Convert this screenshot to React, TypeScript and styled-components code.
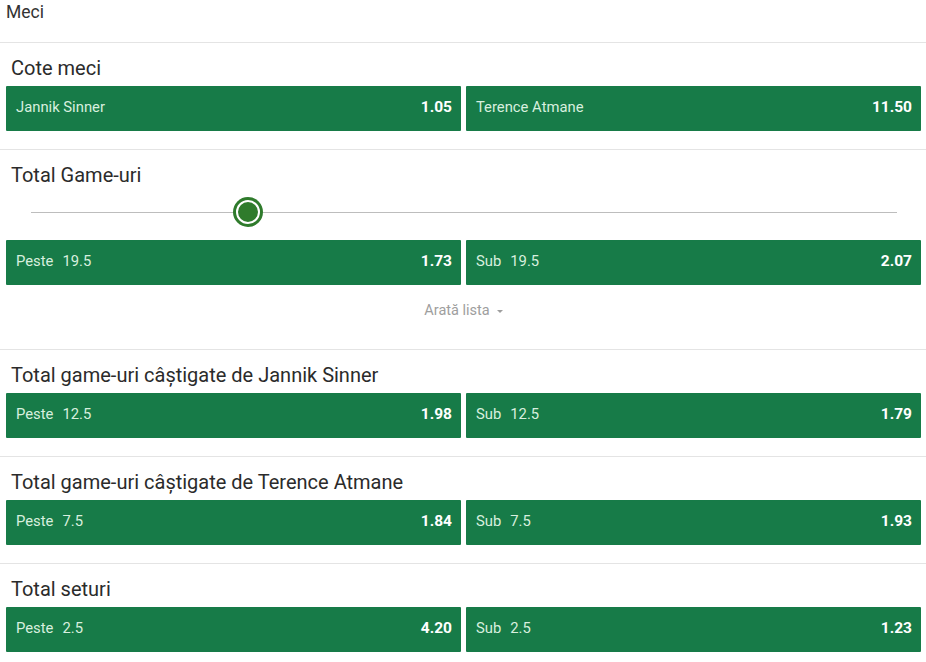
import React from 'react';
import styled, { createGlobalStyle } from 'styled-components';

type Outcome = { label: string; line?: string; odds: string };
type Market = { title: string; outcomes: [Outcome, Outcome]; slider?: number; showList?: boolean };

const markets: Market[] = [
  {
    title: 'Cote meci',
    outcomes: [
      { label: 'Jannik Sinner', odds: '1.05' },
      { label: 'Terence Atmane', odds: '11.50' },
    ],
  },
  {
    title: 'Total Game-uri',
    slider: 0.25,
    showList: true,
    outcomes: [
      { label: 'Peste', line: '19.5', odds: '1.73' },
      { label: 'Sub', line: '19.5', odds: '2.07' },
    ],
  },
  {
    title: 'Total game-uri câștigate de Jannik Sinner',
    outcomes: [
      { label: 'Peste', line: '12.5', odds: '1.98' },
      { label: 'Sub', line: '12.5', odds: '1.79' },
    ],
  },
  {
    title: 'Total game-uri câștigate de Terence Atmane',
    outcomes: [
      { label: 'Peste', line: '7.5', odds: '1.84' },
      { label: 'Sub', line: '7.5', odds: '1.93' },
    ],
  },
  {
    title: 'Total seturi',
    outcomes: [
      { label: 'Peste', line: '2.5', odds: '4.20' },
      { label: 'Sub', line: '2.5', odds: '1.23' },
    ],
  },
];

export default function App(): React.JSX.Element {
  return (
    <>
      <GlobalStyle />
      <StyledPage>
        <StyledHeader>Meci</StyledHeader>
        {markets.map((market) => (
          <StyledSection key={market.title}>
            <StyledTitle>{market.title}</StyledTitle>
            {market.slider !== undefined && (
              <StyledSlider>
                <StyledTrack />
                {/* poziția cursorului vine din date */}
                <StyledKnob style={{ left: `${market.slider * 100}%` }} />
              </StyledSlider>
            )}
            <StyledOutcomes>
              {market.outcomes.map((o) => (
                <StyledOddButton key={o.label}>
                  <StyledLabel>
                    {o.label}
                    {o.line && <StyledLine>{o.line}</StyledLine>}
                  </StyledLabel>
                  <StyledOdds>{o.odds}</StyledOdds>
                </StyledOddButton>
              ))}
            </StyledOutcomes>
            {market.showList && (
              <StyledShowList>
                Arată lista <StyledCaret />
              </StyledShowList>
            )}
          </StyledSection>
        ))}
      </StyledPage>
    </>
  );
}

const GlobalStyle = createGlobalStyle`
  body {
    margin: 0;
    background: #fff;
    font-family: Roboto, 'Liberation Sans', sans-serif;
  }
`;

const StyledPage = styled.div`
  width: 926px;
  color: #333;
`;

const StyledHeader = styled.div`
  height: 43px;
  box-sizing: border-box;
  padding: 1px 6px 0;
  font-size: 17.5px;
  line-height: 22px;
  color: #333;
  border-bottom: 1px solid #e4e4e4;
`;

const StyledSection = styled.section`
  padding: 0 5px 18px 6px;
  border-bottom: 1px solid #e4e4e4;
  &:last-child {
    border-bottom: none;
  }
`;

const StyledTitle = styled.div`
  padding: 13px 5px 0;
  margin-bottom: 6px;
  font-size: 20px;
  line-height: 24px;
  color: #2b2b2b;
`;

const StyledSlider = styled.div`
  position: relative;
  height: 47px;
  margin: 0 24px 0 25px;
`;

const StyledTrack = styled.div`
  position: absolute;
  left: 0;
  right: 0;
  top: 19px;
  height: 1px;
  background: #bdbdbd;
`;

const StyledKnob = styled.div`
  position: absolute;
  top: 19px;
  width: 20px;
  height: 20px;
  transform: translate(-50%, -50%);
  border-radius: 50%;
  background: #2f7b2c;
  border: 2px solid #fff;
  box-shadow: 0 0 0 3px #2f7b2c;
`;

const StyledOutcomes = styled.div`
  display: grid;
  grid-template-columns: 1fr 1fr;
  gap: 5px;
`;

const StyledOddButton = styled.div`
  display: flex;
  align-items: center;
  justify-content: space-between;
  height: 45px;
  padding: 0 9px 0 10px;
  box-sizing: border-box;
  background: #177b48;
  border-radius: 1px;
`;

const StyledLabel = styled.span`
  font-size: 14.8px;
  color: #d8efdf;
  margin-top: -3px;
`;

const StyledLine = styled.span`
  margin-left: 9px;
`;

const StyledOdds = styled.span`
  font-size: 15.5px;
  font-weight: 700;
  color: #fff;
  margin-top: -3px;
`;

const StyledShowList = styled.div`
  display: flex;
  align-items: center;
  justify-content: center;
  gap: 7px;
  padding: 16px 0 10px;
  font-size: 14.5px;
  line-height: 20px;
  color: #9e9e9e;
`;

const StyledCaret = styled.span`
  width: 0;
  height: 0;
  border-left: 3px solid transparent;
  border-right: 3px solid transparent;
  border-top: 3px solid #9e9e9e;
`;
